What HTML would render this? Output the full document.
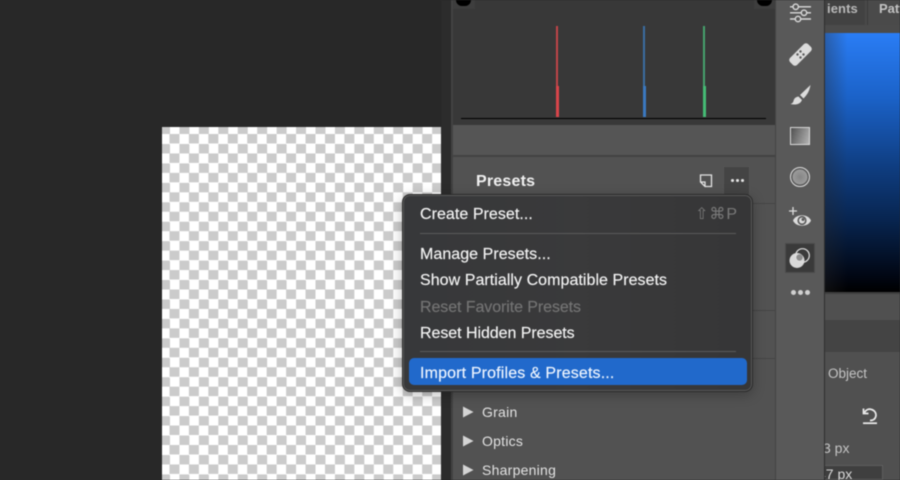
<!DOCTYPE html>
<html><head><meta charset="utf-8">
<style>
html,body{margin:0;padding:0;width:900px;height:480px;overflow:hidden;background:#282828}
#r{position:relative;width:900px;height:480px;overflow:hidden;font-family:"Liberation Sans",sans-serif;filter:blur(.45px)}
.a{position:absolute}
.m{position:absolute;left:420px;font-size:16px;line-height:20px;color:#f4f4f4;white-space:nowrap;letter-spacing:.05px;-webkit-text-stroke:.15px}
.t{position:absolute;left:482px;font-size:14px;line-height:18px;color:#e2e2e2;white-space:nowrap;letter-spacing:.25px}
.r{position:absolute;font-size:14px;line-height:18px;color:#c4c4c4;white-space:nowrap}
</style></head><body><div id="r">
<div class="a" style="left:162px;top:127px;width:279px;height:353px;background:repeating-conic-gradient(#cbcbcb 0 25%,#fff 0 50%) -2px 7px/19.45px 19.45px"></div>
<div class="a" style="left:441px;top:0;width:10px;height:480px;background:#2c2c2c"></div>
<div class="a" style="left:451px;top:0;width:2px;height:480px;background:#424242"></div>
<div class="a" style="left:453px;top:0;width:322px;height:480px;background:#525252"></div>
<div class="a" style="left:453px;top:0;width:322px;height:125px;background:#383838"></div>
<div class="a" style="left:453px;top:155px;width:322px;height:2px;background:#434343"></div>
<div class="a" style="left:453px;top:125px;width:322px;height:30px;background:#555"></div>
<!-- corners -->
<div class="a" style="left:453px;top:0;width:22px;height:9px;background:#3e3e3e"></div>
<div class="a" style="left:456px;top:0;width:15px;height:6px;background:#000;border-radius:0 0 6px 6px"></div>
<div class="a" style="left:754px;top:0;width:21px;height:9px;background:#3e3e3e"></div>
<div class="a" style="left:757px;top:0;width:15px;height:6px;background:#000;border-radius:0 0 6px 6px"></div>
<!-- histogram -->
<div class="a" style="left:461px;top:118px;width:305px;height:1px;background:#000"></div>
<div class="a" style="left:556px;top:26px;width:2px;height:60px;background:#c04448"></div>
<div class="a" style="left:555.5px;top:86px;width:3px;height:31px;background:#d9444a"></div>
<div class="a" style="left:643px;top:26px;width:2px;height:60px;background:#3b6ea3"></div>
<div class="a" style="left:642.5px;top:86px;width:3px;height:31px;background:#3a78c0"></div>
<div class="a" style="left:703px;top:26px;width:2px;height:60px;background:#46a26c"></div>
<div class="a" style="left:702.5px;top:86px;width:3px;height:31px;background:#45bb74"></div>
<!-- presets header -->
<div class="a" style="left:476px;top:172px;font-size:16px;line-height:20px;font-weight:bold;color:#f0f0f0;letter-spacing:.2px">Presets</div>
<svg class="a" style="left:699px;top:173px" width="14" height="15" viewBox="0 0 14 15"><path d="M1.5 2h11v11.5H6L1.5 9z M1.5 9H6v4.5" fill="none" stroke="#e4e4e4" stroke-width="1.3"/></svg>
<div class="a" style="left:723px;top:166px;width:27px;height:30px;background:#444;border:1px solid #555;box-sizing:border-box"></div>
<div class="a" style="left:731px;top:179px;width:3px;height:3px;border-radius:50%;background:#e6e6e6;box-shadow:5px 0 #e6e6e6,10px 0 #e6e6e6"></div>
<div class="a" style="left:752px;top:203px;width:23px;height:1px;background:#454545"></div>
<div class="a" style="left:752px;top:310px;width:23px;height:1px;background:#454545"></div>
<div class="a" style="left:752px;top:358px;width:23px;height:1px;background:#454545"></div>
<!-- list -->
<svg class="a" style="left:463px;top:406px" width="12" height="72" viewBox="0 0 12 72" fill="#d4d4d4"><path d="M0 .5l10.500 5.500L0 11.500zM0 29.500l10.500 5.500L0 40.500zM0 58.500l10.500 5.500L0 69.500z"/></svg>
<div class="t" style="top:403px">Grain</div>
<div class="t" style="top:432px">Optics</div>
<div class="t" style="top:461px">Sharpening</div>
<!-- right panel -->
<div class="a" style="left:825px;top:0;width:75px;height:480px;background:#505050"></div>
<div class="a" style="left:825px;top:0;width:75px;height:25px;background:#424242"></div>
<div class="a" style="left:865px;top:0;width:35px;height:25px;background:#4a4a4a"></div>
<div class="a" style="left:867px;top:0;width:1px;height:25px;background:#3a3a3a"></div>
<div class="a" style="left:825px;top:25px;width:75px;height:8px;background:#4b4b4b"></div>
<div class="r" style="left:827px;top:0;font-weight:bold;color:#b9b9b9;font-size:13px;letter-spacing:.1px">ients</div>
<div class="r" style="left:879px;top:0;font-weight:bold;color:#c4c4c4;font-size:13px">Patt</div>
<div class="a" style="left:825px;top:33px;width:75px;height:259px;background:linear-gradient(180deg,#2a7df5 0%,#1b62c8 25%,#0f3d80 52%,#082550 72%,#010510 95%,#000 100%)"></div>
<div class="a" style="left:825px;top:33px;width:75px;height:259px;background:linear-gradient(90deg,rgba(40,40,40,.35),rgba(0,0,0,0) 30%)"></div>
<div class="a" style="left:825px;top:292px;width:75px;height:2px;background:#3e3e3e"></div>
<div class="a" style="left:825px;top:294px;width:75px;height:26px;background:#505050"></div>
<div class="a" style="left:825px;top:320px;width:75px;height:32px;background:#444"></div>
<div class="r" style="left:828px;top:365px;font-size:13.5px">Object</div>
<svg class="a" style="left:861px;top:407px" width="18" height="18" viewBox="0 0 18 18" fill="none" stroke="#ececec" stroke-width="1.7"><path d="M3.500 5.500C5 2.500 8 1.500 10.500 2.500C14 3.500 15.500 6.500 14.800 9.500C14 12.500 11.500 13.500 9 13.500"/><path d="M2.500 1.500V6.500H7.500"/><path d="M2 16.200h14"/></svg>
<div class="r" style="left:823px;top:439px">3 px</div>
<div class="a" style="left:825px;top:465px;width:58px;height:15px;background:#3f3f3f;border:1px solid #5e5e5e;box-sizing:border-box;border-left:0"></div>
<div class="r" style="left:818px;top:465px;color:#d8d8d8">47 px</div>
<!-- sidebar -->
<div class="a" style="left:775px;top:0;width:1px;height:480px;background:#444"></div>
<div class="a" style="left:776px;top:0;width:48px;height:480px;background:#595959"></div>
<div class="a" style="left:824px;top:0;width:1px;height:480px;background:#2e2e2e"></div>
<!-- sliders -->
<svg class="a" style="left:790px;top:3px" width="21" height="20" viewBox="0 0 21 20" fill="none" stroke="#dadada" stroke-width="1.4"><path d="M0 3.800h21M0 9.800h21M0 16h21"/><circle cx="5.700" cy="3.800" r="2.700" fill="#595959"/><circle cx="14" cy="9.800" r="2.700" fill="#595959"/><circle cx="8" cy="16" r="2.700" fill="#595959"/></svg>
<!-- bandage -->
<svg class="a" style="left:789px;top:43px" width="23" height="23" viewBox="0 0 23 23"><path d="M4 22L1 19a3 3 0 0 1 0-4L15 1a3 3 0 0 1 4 0l3 3a3 3 0 0 1 0 4L8 22a3 3 0 0 1-4 0z" fill="#dcdcdc"/><g fill="#595959"><circle cx="11.500" cy="8.500" r="1.200"/><circle cx="14.500" cy="11.500" r="1.200"/><circle cx="8.500" cy="11.500" r="1.200"/><circle cx="11.500" cy="14.500" r="1.200"/></g></svg>
<!-- brush -->
<svg class="a" style="left:790px;top:84px" width="21" height="22" viewBox="0 0 21 22" fill="#dcdcdc"><path d="M20.500 1L10 11l3.500 3.500C17 11 19.500 7 20.500 1z"/><path d="M8.500 12.500c-3 .5-4.500 2-5 4.500-.4 1.700-1.500 2.500-3 3 4 1 9.500 1 11.500-4z"/></svg>
<!-- gradient -->
<div class="a" style="left:790px;top:127px;width:20px;height:18px;box-sizing:border-box;border:1.5px solid #d8d8d8;background:linear-gradient(110deg,#505050,#b4b4b4)"></div>
<!-- radial -->
<div class="a" style="left:790px;top:167px;width:20px;height:20px;box-sizing:border-box;border-radius:50%;border:1.5px solid #dcdcdc;background:radial-gradient(circle,#858585 0%,#989898 50%,#b8b8b8 100%);box-shadow:inset 0 0 0 1.5px #595959"></div>
<!-- eye -->
<svg class="a" style="left:788px;top:205px" width="25" height="24" viewBox="0 0 25 24"><path d="M5 2v8M1 6h8" stroke="#dcdcdc" stroke-width="1.300" fill="none"/><path d="M5 15.500C8 8.500 20 8.500 23 15.500C20 22.500 8 22.500 5 15.500z" fill="#dcdcdc"/><circle cx="14" cy="15.500" r="4.600" fill="#595959"/><circle cx="14" cy="15.500" r="3" fill="#dcdcdc"/><circle cx="15" cy="14.500" r="1.500" fill="#595959"/></svg>
<!-- selected -->
<div class="a" style="left:785px;top:243px;width:30px;height:30px;box-sizing:border-box;background:#3a3a3a;border:1px solid #4c4c4c"></div>
<svg class="a" style="left:789px;top:247px" width="22" height="22" viewBox="0 0 22 22"><circle cx="8" cy="13.500" r="7.500" fill="#d8d8d8"/><circle cx="13.500" cy="8.500" r="6.800" fill="none" stroke="#e0e0e0" stroke-width="1.200"/><circle cx="10.500" cy="10.500" r="3.200" fill="#8c8c8c"/></svg>
<div class="a" style="left:791px;top:290px;width:5px;height:5px;border-radius:50%;background:#cfcfcf;box-shadow:7px 0 #cfcfcf,14px 0 #cfcfcf"></div>
<!-- menu -->
<div class="a" style="left:402px;top:194px;width:351px;height:198px;box-sizing:border-box;border:1px solid #2a2a2a;border-radius:8px;background:linear-gradient(90deg,#37383a,#3a3a3b 50%,#363637);box-shadow:inset 0 0 0 1px #5a5a5a,0 3px 12px rgba(0,0,0,.25)"></div>
<div class="m" style="top:204.5px">Create Preset...</div>
<div class="a" style="left:695px;top:205px;font-size:16px;line-height:20px;color:#7a7a7a;white-space:nowrap;letter-spacing:1px;font-family:'Liberation Sans','DejaVu Sans',sans-serif">⇧⌘P</div>
<div class="a" style="left:420px;top:233px;width:316px;height:1px;background:#5a5a5a"></div>
<div class="m" style="top:244.5px">Manage Presets...</div>
<div class="m" style="top:271px">Show Partially Compatible Presets</div>
<div class="m" style="top:297.500px;color:#747474;letter-spacing:-.08px">Reset Favorite Presets</div>
<div class="m" style="top:323.500px;letter-spacing:-.05px">Reset Hidden Presets</div>
<div class="a" style="left:420px;top:351px;width:316px;height:1px;background:#5a5a5a"></div>
<div class="a" style="left:409px;top:358px;width:338px;height:27px;border-radius:5px;background:#2169cb"></div>
<div class="m" style="top:363.500px;color:#eef5ff;letter-spacing:.15px">Import Profiles &amp; Presets...</div>
</div></body></html>
